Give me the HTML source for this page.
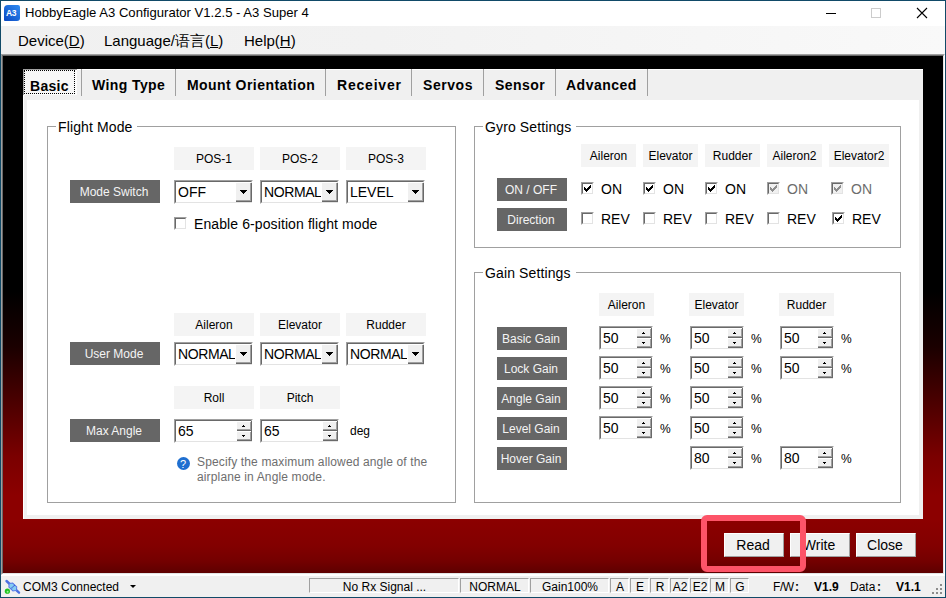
<!DOCTYPE html>
<html><head><meta charset="utf-8">
<style>
*{box-sizing:border-box;margin:0;padding:0}
html,body{width:946px;height:598px;overflow:hidden;background:#fff}
body{position:relative;font-family:"Liberation Sans",sans-serif;color:#000}
.a{position:absolute}
.t{position:absolute;white-space:pre;line-height:1}
#border{left:0;top:0;width:946px;height:598px;border:1px solid #114a68}
#title{left:1px;top:1px;width:944px;height:25px;background:#fff}
#menu{left:1px;top:26px;width:944px;height:28px;background:linear-gradient(to right,#f0f0f0 0%,#f2f2f2 40%,#f9f9f9 100%)}
#mdi{left:1px;top:54px;width:944px;height:521px;border-top:1px solid #a0a0a0;border-left:1px solid #a0a0a0;border-right:1px solid #fff;border-bottom:1px solid #fff}
#mdi2{left:2px;top:55px;width:942px;height:519px;border-top:1px solid #696969;border-left:1px solid #696969;border-right:1px solid #e3e3e3;border-bottom:1px solid #e3e3e3;
 background:linear-gradient(to bottom,#000 0px,#000 235px,#1a0000 290px,#4a0000 345px,#7a0000 400px,#8c0000 440px,#8c0000 463px,#820000 490px,#740000 505px,#5e0000 517px)}
#panel{left:23px;top:69px;width:900px;height:450px;background:#f0f0f0;border-left:1px solid #fff;border-top:1px solid #fff}
#page{left:27px;top:100px;width:892px;height:415px;background:#fff}
.sep{position:absolute;top:69px;width:1px;height:27px;background:#a0a0a0}
.tab{font-weight:bold;font-size:14px;letter-spacing:0.3px;top:78px}
.grp{position:absolute;border:1px solid #a0a0a0}
.gl{position:absolute;background:#fff;font-size:14px;line-height:1;padding:0 5px 0 2px;white-space:pre;letter-spacing:0.12px}
.hdr{position:absolute;background:#f4f4f4;font-size:12px;text-align:center;line-height:25px;height:23px;white-space:pre}
.lbl{position:absolute;background:#666;color:#f4f4f4;font-size:12px;text-align:center;line-height:25px;padding-right:2px;height:23px;white-space:pre}
.combo,.spin,.cb{position:absolute;background:#fff}
.combo{width:79px;height:24px}
.spin{width:54px;height:24px}
.cb{width:13px;height:13px}
.o{position:absolute;left:0;top:0;right:0;bottom:0;border-top:1px solid #a0a0a0;border-left:1px solid #a0a0a0;border-right:1px solid #fff;border-bottom:1px solid #fff}
.i{position:absolute;left:1px;top:1px;right:1px;bottom:1px;border-top:1px solid #696969;border-left:1px solid #696969;border-right:1px solid #e3e3e3;border-bottom:1px solid #e3e3e3}
.tx{position:absolute;left:4px;top:5px;font-size:14px;line-height:1;white-space:pre;overflow:hidden}
.combo .tx{width:57px}
.rb{position:absolute;right:2px;background:#f0f0f0;border-top:1px solid #fff;border-left:1px solid #fff;box-shadow:inset -1px -1px 0 #a0a0a0, 1px 1px 0 #696969}
.combo .rb{top:2px;width:16px;height:19px}
.spin .rb{width:15px;height:9px}
.spin .rs{position:absolute;right:1px;top:2px;width:1px;height:20px;background:#696969}
.spin .u{top:2px}.spin .d{top:12px}
.rb svg{position:absolute}
.combo .rb svg{left:4px;top:7px}
.spin .rb svg{left:5px;top:3px}
.cb svg{position:absolute;left:3px;top:3px}
.cbt{position:absolute;font-size:14px;line-height:1;white-space:pre}
.pct{position:absolute;font-size:12px;line-height:1;white-space:pre}
.btn3{position:absolute;height:24px;width:60px;padding-right:2px;background:#f0f0f0;border-top:1px solid #fff;border-left:1px solid #fff;border-right:1px solid #a0a0a0;border-bottom:1px solid #a0a0a0;font-size:14px;text-align:center;line-height:22px}
.sp{position:absolute;top:578px;height:15px;padding-left:1px;border-top:1px solid #a0a0a0;border-left:1px solid #a0a0a0;border-right:1px solid #fff;border-bottom:1px solid #fff;font-size:12px;text-align:center;line-height:17px;white-space:pre}
</style></head><body>
<div class="a" id="border"></div>
<div class="a" id="title"></div>
<!-- app icon -->
<div class="a" style="left:4px;top:5px;width:16px;height:16px;border-radius:4px 2px 3px 1px;background:linear-gradient(to top right,#0a48c2,#2e8cf2);"></div>
<div class="t" style="left:6px;top:9px;font-size:8.5px;font-weight:bold;color:#fff;letter-spacing:-0.4px">A3</div>
<div class="t" style="left:25px;top:6px;font-size:13.1px;color:#000">HobbyEagle A3 Configurator V1.2.5 - A3 Super 4</div>
<!-- window buttons -->
<div class="a" style="left:826px;top:13px;width:10px;height:1px;background:#000"></div>
<div class="a" style="left:871px;top:8px;width:10px;height:10px;border:1px solid #ccc"></div>
<svg class="a" style="left:916px;top:7px" width="12" height="12" viewBox="0 0 12 12"><path d="M1 1L11 11M11 1L1 11" stroke="#000" stroke-width="1.1"/></svg>

<div class="a" id="menu"></div>
<div class="t" style="left:18px;top:33px;font-size:15px">Device(<u>D</u>)</div>
<div class="t" style="left:104px;top:33px;font-size:15px">Language/语言(<u>L</u>)</div>
<div class="t" style="left:244px;top:33px;font-size:15px">Help(<u>H</u>)</div>

<div class="a" id="mdi"></div>
<div class="a" id="mdi2"></div>

<div class="a" id="panel"></div>
<!-- selected tab focus -->
<div class="a" style="left:23px;top:69px;width:54px;height:26px;border-left:1px solid #a0a0a0;border-top:1px solid #a0a0a0;background:#fcfcfc"></div>
<div class="a" style="left:24px;top:70px;width:51px;height:24px;border:1px dotted #000;background:#f7f7f7"></div>
<div class="sep" style="left:81px"></div>
<div class="sep" style="left:175px"></div>
<div class="sep" style="left:325px"></div>
<div class="sep" style="left:411px"></div>
<div class="sep" style="left:483px"></div>
<div class="sep" style="left:555px"></div>
<div class="sep" style="left:647px"></div>
<div class="t tab" style="left:30px;top:79px;letter-spacing:0.3px">Basic</div>
<div class="t tab" style="left:92px;letter-spacing:0.4px">Wing Type</div>
<div class="t tab" style="left:187px;letter-spacing:0.45px">Mount Orientation</div>
<div class="t tab" style="left:337px;letter-spacing:0.8px">Receiver</div>
<div class="t tab" style="left:423px;letter-spacing:0.55px">Servos</div>
<div class="t tab" style="left:495px;letter-spacing:0.45px">Sensor</div>
<div class="t tab" style="left:566px;letter-spacing:0.5px">Advanced</div>

<div class="a" id="page"></div>

<!-- Flight Mode group -->
<div class="grp" style="left:47px;top:126px;width:409px;height:377px"></div>
<div class="gl" style="left:56px;top:120px">Flight Mode</div>

<div class="hdr" style="left:174px;top:147px;width:80px">POS-1</div>
<div class="hdr" style="left:260px;top:147px;width:80px">POS-2</div>
<div class="hdr" style="left:346px;top:147px;width:80px">POS-3</div>
<div class="lbl" style="left:70px;top:180px;width:90px">Mode Switch</div>
<div class="combo" style="left:174px;top:180px"><div class="o"></div><div class="i"></div><div class="tx" style="left:4px">OFF</div><div class="rb"><svg width="7" height="4" shape-rendering="crispEdges"><g fill="#000"><rect x="0" y="0" width="7" height="1"/><rect x="1" y="1" width="5" height="1"/><rect x="2" y="2" width="3" height="1"/><rect x="3" y="3" width="1" height="1"/></g></svg></div></div>
<div class="combo" style="left:260px;top:180px"><div class="o"></div><div class="i"></div><div class="tx" style="left:4px;letter-spacing:-0.4px">NORMAL</div><div class="rb"><svg width="7" height="4" shape-rendering="crispEdges"><g fill="#000"><rect x="0" y="0" width="7" height="1"/><rect x="1" y="1" width="5" height="1"/><rect x="2" y="2" width="3" height="1"/><rect x="3" y="3" width="1" height="1"/></g></svg></div></div>
<div class="combo" style="left:346px;top:180px"><div class="o"></div><div class="i"></div><div class="tx" style="left:4px">LEVEL</div><div class="rb"><svg width="7" height="4" shape-rendering="crispEdges"><g fill="#000"><rect x="0" y="0" width="7" height="1"/><rect x="1" y="1" width="5" height="1"/><rect x="2" y="2" width="3" height="1"/><rect x="3" y="3" width="1" height="1"/></g></svg></div></div>
<div class="cb" style="left:174px;top:217px;background:#fff"><div class="o"></div><div class="i"></div></div>
<div class="cbt" style="left:194px;top:217px;letter-spacing:0.1px">Enable 6-position flight mode</div>

<div class="hdr" style="left:174px;top:313px;width:80px">Aileron</div>
<div class="hdr" style="left:260px;top:313px;width:80px">Elevator</div>
<div class="hdr" style="left:346px;top:313px;width:80px">Rudder</div>
<div class="lbl" style="left:70px;top:342px;width:90px">User Mode</div>
<div class="combo" style="left:174px;top:342px"><div class="o"></div><div class="i"></div><div class="tx" style="left:4px;letter-spacing:-0.4px">NORMAL</div><div class="rb"><svg width="7" height="4" shape-rendering="crispEdges"><g fill="#000"><rect x="0" y="0" width="7" height="1"/><rect x="1" y="1" width="5" height="1"/><rect x="2" y="2" width="3" height="1"/><rect x="3" y="3" width="1" height="1"/></g></svg></div></div>
<div class="combo" style="left:260px;top:342px"><div class="o"></div><div class="i"></div><div class="tx" style="left:4px;letter-spacing:-0.4px">NORMAL</div><div class="rb"><svg width="7" height="4" shape-rendering="crispEdges"><g fill="#000"><rect x="0" y="0" width="7" height="1"/><rect x="1" y="1" width="5" height="1"/><rect x="2" y="2" width="3" height="1"/><rect x="3" y="3" width="1" height="1"/></g></svg></div></div>
<div class="combo" style="left:346px;top:342px"><div class="o"></div><div class="i"></div><div class="tx" style="left:4px;letter-spacing:-0.4px">NORMAL</div><div class="rb"><svg width="7" height="4" shape-rendering="crispEdges"><g fill="#000"><rect x="0" y="0" width="7" height="1"/><rect x="1" y="1" width="5" height="1"/><rect x="2" y="2" width="3" height="1"/><rect x="3" y="3" width="1" height="1"/></g></svg></div></div>

<div class="hdr" style="left:174px;top:386px;width:80px">Roll</div>
<div class="hdr" style="left:260px;top:386px;width:80px">Pitch</div>
<div class="lbl" style="left:70px;top:419px;width:90px">Max Angle</div>
<div class="spin" style="left:174px;top:419px;width:79px"><div class="o"></div><div class="i"></div><div class="tx">65</div><div class="rb u"><svg width="3" height="2" shape-rendering="crispEdges"><g fill="#000"><rect x="1" y="0" width="1" height="1"/><rect x="0" y="1" width="3" height="1"/></g></svg></div><div class="rb d"><svg width="3" height="2" shape-rendering="crispEdges"><g fill="#000"><rect x="0" y="0" width="3" height="1"/><rect x="1" y="1" width="1" height="1"/></g></svg></div><div class="rs"></div></div>
<div class="spin" style="left:260px;top:419px;width:79px"><div class="o"></div><div class="i"></div><div class="tx">65</div><div class="rb u"><svg width="3" height="2" shape-rendering="crispEdges"><g fill="#000"><rect x="1" y="0" width="1" height="1"/><rect x="0" y="1" width="3" height="1"/></g></svg></div><div class="rb d"><svg width="3" height="2" shape-rendering="crispEdges"><g fill="#000"><rect x="0" y="0" width="3" height="1"/><rect x="1" y="1" width="1" height="1"/></g></svg></div><div class="rs"></div></div>
<div class="pct" style="left:350px;top:425px">deg</div>
<div class="a" style="left:177px;top:457px;width:13px;height:13px;border-radius:50%;background:#1f6fd0"></div>
<div class="t" style="left:180px;top:459px;font-size:11px;color:#fff">?</div>
<div class="t" style="left:197px;top:455px;font-size:12px;color:#6e6e6e;line-height:15px;letter-spacing:0.14px">Specify the maximum allowed angle of the
airplane in Angle mode.</div>

<!-- Gyro Settings group -->
<div class="grp" style="left:474px;top:126px;width:427px;height:122px"></div>
<div class="gl" style="left:483px;top:120px">Gyro Settings</div>
<div class="hdr" style="left:581px;top:144px;width:55px">Aileron</div>
<div class="hdr" style="left:643px;top:144px;width:55px">Elevator</div>
<div class="hdr" style="left:705px;top:144px;width:55px">Rudder</div>
<div class="hdr" style="left:767px;top:144px;width:55px">Aileron2</div>
<div class="hdr" style="left:829px;top:144px;width:60px">Elevator2</div>
<div class="lbl" style="left:497px;top:178px;width:70px">ON / OFF</div>
<div class="lbl" style="left:497px;top:208px;width:70px">Direction</div>

<div class="cb" style="left:581px;top:182px;background:#fff"><div class="o"></div><div class="i"></div><svg width="7" height="7" shape-rendering="crispEdges"><g fill="#000"><rect x="6" y="0" width="1" height="1"/><rect x="5" y="1" width="2" height="1"/><rect x="0" y="2" width="1" height="1"/><rect x="4" y="2" width="3" height="1"/><rect x="0" y="3" width="2" height="1"/><rect x="3" y="3" width="3" height="1"/><rect x="0" y="4" width="5" height="1"/><rect x="1" y="5" width="3" height="1"/><rect x="2" y="6" width="1" height="1"/></g></svg></div>
<div class="cbt" style="left:601px;top:182px;color:#000">ON</div>
<div class="cb" style="left:581px;top:212px;background:#fff"><div class="o"></div><div class="i"></div></div>
<div class="cbt" style="left:601px;top:212px">REV</div>
<div class="cb" style="left:643px;top:182px;background:#fff"><div class="o"></div><div class="i"></div><svg width="7" height="7" shape-rendering="crispEdges"><g fill="#000"><rect x="6" y="0" width="1" height="1"/><rect x="5" y="1" width="2" height="1"/><rect x="0" y="2" width="1" height="1"/><rect x="4" y="2" width="3" height="1"/><rect x="0" y="3" width="2" height="1"/><rect x="3" y="3" width="3" height="1"/><rect x="0" y="4" width="5" height="1"/><rect x="1" y="5" width="3" height="1"/><rect x="2" y="6" width="1" height="1"/></g></svg></div>
<div class="cbt" style="left:663px;top:182px;color:#000">ON</div>
<div class="cb" style="left:643px;top:212px;background:#fff"><div class="o"></div><div class="i"></div></div>
<div class="cbt" style="left:663px;top:212px">REV</div>
<div class="cb" style="left:705px;top:182px;background:#fff"><div class="o"></div><div class="i"></div><svg width="7" height="7" shape-rendering="crispEdges"><g fill="#000"><rect x="6" y="0" width="1" height="1"/><rect x="5" y="1" width="2" height="1"/><rect x="0" y="2" width="1" height="1"/><rect x="4" y="2" width="3" height="1"/><rect x="0" y="3" width="2" height="1"/><rect x="3" y="3" width="3" height="1"/><rect x="0" y="4" width="5" height="1"/><rect x="1" y="5" width="3" height="1"/><rect x="2" y="6" width="1" height="1"/></g></svg></div>
<div class="cbt" style="left:725px;top:182px;color:#000">ON</div>
<div class="cb" style="left:705px;top:212px;background:#fff"><div class="o"></div><div class="i"></div></div>
<div class="cbt" style="left:725px;top:212px">REV</div>
<div class="cb" style="left:767px;top:182px;background:#f0f0f0"><div class="o"></div><div class="i"></div><svg width="7" height="7" shape-rendering="crispEdges"><g fill="#8d8d8d"><rect x="6" y="0" width="1" height="1"/><rect x="5" y="1" width="2" height="1"/><rect x="0" y="2" width="1" height="1"/><rect x="4" y="2" width="3" height="1"/><rect x="0" y="3" width="2" height="1"/><rect x="3" y="3" width="3" height="1"/><rect x="0" y="4" width="5" height="1"/><rect x="1" y="5" width="3" height="1"/><rect x="2" y="6" width="1" height="1"/></g></svg></div>
<div class="cbt" style="left:787px;top:182px;color:#6d6d6d">ON</div>
<div class="cb" style="left:767px;top:212px;background:#fff"><div class="o"></div><div class="i"></div></div>
<div class="cbt" style="left:787px;top:212px">REV</div>
<div class="cb" style="left:831px;top:182px;background:#f0f0f0"><div class="o"></div><div class="i"></div><svg width="7" height="7" shape-rendering="crispEdges"><g fill="#8d8d8d"><rect x="6" y="0" width="1" height="1"/><rect x="5" y="1" width="2" height="1"/><rect x="0" y="2" width="1" height="1"/><rect x="4" y="2" width="3" height="1"/><rect x="0" y="3" width="2" height="1"/><rect x="3" y="3" width="3" height="1"/><rect x="0" y="4" width="5" height="1"/><rect x="1" y="5" width="3" height="1"/><rect x="2" y="6" width="1" height="1"/></g></svg></div>
<div class="cbt" style="left:851px;top:182px;color:#6d6d6d">ON</div>
<div class="cb" style="left:832px;top:212px;background:#fff"><div class="o"></div><div class="i"></div><svg width="7" height="7" shape-rendering="crispEdges"><g fill="#000"><rect x="6" y="0" width="1" height="1"/><rect x="5" y="1" width="2" height="1"/><rect x="0" y="2" width="1" height="1"/><rect x="4" y="2" width="3" height="1"/><rect x="0" y="3" width="2" height="1"/><rect x="3" y="3" width="3" height="1"/><rect x="0" y="4" width="5" height="1"/><rect x="1" y="5" width="3" height="1"/><rect x="2" y="6" width="1" height="1"/></g></svg></div>
<div class="cbt" style="left:852px;top:212px">REV</div>

<!-- Gain Settings group -->
<div class="grp" style="left:474px;top:272px;width:427px;height:231px"></div>
<div class="gl" style="left:483px;top:266px">Gain Settings</div>
<div class="hdr" style="left:599px;top:293px;width:55px">Aileron</div>
<div class="hdr" style="left:689px;top:293px;width:55px">Elevator</div>
<div class="hdr" style="left:779px;top:293px;width:55px">Rudder</div>
<div class="lbl" style="left:497px;top:327px;width:70px">Basic Gain</div>
<div class="lbl" style="left:497px;top:357px;width:70px">Lock Gain</div>
<div class="lbl" style="left:497px;top:387px;width:70px">Angle Gain</div>
<div class="lbl" style="left:497px;top:417px;width:70px">Level Gain</div>
<div class="lbl" style="left:497px;top:447px;width:70px">Hover Gain</div>

<div class="spin" style="left:599px;top:326px;width:54px"><div class="o"></div><div class="i"></div><div class="tx">50</div><div class="rb u"><svg width="3" height="2" shape-rendering="crispEdges"><g fill="#000"><rect x="1" y="0" width="1" height="1"/><rect x="0" y="1" width="3" height="1"/></g></svg></div><div class="rb d"><svg width="3" height="2" shape-rendering="crispEdges"><g fill="#000"><rect x="0" y="0" width="3" height="1"/><rect x="1" y="1" width="1" height="1"/></g></svg></div><div class="rs"></div></div>
<div class="pct" style="left:660px;top:333px">%</div>
<div class="spin" style="left:690px;top:326px;width:54px"><div class="o"></div><div class="i"></div><div class="tx">50</div><div class="rb u"><svg width="3" height="2" shape-rendering="crispEdges"><g fill="#000"><rect x="1" y="0" width="1" height="1"/><rect x="0" y="1" width="3" height="1"/></g></svg></div><div class="rb d"><svg width="3" height="2" shape-rendering="crispEdges"><g fill="#000"><rect x="0" y="0" width="3" height="1"/><rect x="1" y="1" width="1" height="1"/></g></svg></div><div class="rs"></div></div>
<div class="pct" style="left:751px;top:333px">%</div>
<div class="spin" style="left:780px;top:326px;width:54px"><div class="o"></div><div class="i"></div><div class="tx">50</div><div class="rb u"><svg width="3" height="2" shape-rendering="crispEdges"><g fill="#000"><rect x="1" y="0" width="1" height="1"/><rect x="0" y="1" width="3" height="1"/></g></svg></div><div class="rb d"><svg width="3" height="2" shape-rendering="crispEdges"><g fill="#000"><rect x="0" y="0" width="3" height="1"/><rect x="1" y="1" width="1" height="1"/></g></svg></div><div class="rs"></div></div>
<div class="pct" style="left:841px;top:333px">%</div>
<div class="spin" style="left:599px;top:356px;width:54px"><div class="o"></div><div class="i"></div><div class="tx">50</div><div class="rb u"><svg width="3" height="2" shape-rendering="crispEdges"><g fill="#000"><rect x="1" y="0" width="1" height="1"/><rect x="0" y="1" width="3" height="1"/></g></svg></div><div class="rb d"><svg width="3" height="2" shape-rendering="crispEdges"><g fill="#000"><rect x="0" y="0" width="3" height="1"/><rect x="1" y="1" width="1" height="1"/></g></svg></div><div class="rs"></div></div>
<div class="pct" style="left:660px;top:363px">%</div>
<div class="spin" style="left:690px;top:356px;width:54px"><div class="o"></div><div class="i"></div><div class="tx">50</div><div class="rb u"><svg width="3" height="2" shape-rendering="crispEdges"><g fill="#000"><rect x="1" y="0" width="1" height="1"/><rect x="0" y="1" width="3" height="1"/></g></svg></div><div class="rb d"><svg width="3" height="2" shape-rendering="crispEdges"><g fill="#000"><rect x="0" y="0" width="3" height="1"/><rect x="1" y="1" width="1" height="1"/></g></svg></div><div class="rs"></div></div>
<div class="pct" style="left:751px;top:363px">%</div>
<div class="spin" style="left:780px;top:356px;width:54px"><div class="o"></div><div class="i"></div><div class="tx">50</div><div class="rb u"><svg width="3" height="2" shape-rendering="crispEdges"><g fill="#000"><rect x="1" y="0" width="1" height="1"/><rect x="0" y="1" width="3" height="1"/></g></svg></div><div class="rb d"><svg width="3" height="2" shape-rendering="crispEdges"><g fill="#000"><rect x="0" y="0" width="3" height="1"/><rect x="1" y="1" width="1" height="1"/></g></svg></div><div class="rs"></div></div>
<div class="pct" style="left:841px;top:363px">%</div>
<div class="spin" style="left:599px;top:386px;width:54px"><div class="o"></div><div class="i"></div><div class="tx">50</div><div class="rb u"><svg width="3" height="2" shape-rendering="crispEdges"><g fill="#000"><rect x="1" y="0" width="1" height="1"/><rect x="0" y="1" width="3" height="1"/></g></svg></div><div class="rb d"><svg width="3" height="2" shape-rendering="crispEdges"><g fill="#000"><rect x="0" y="0" width="3" height="1"/><rect x="1" y="1" width="1" height="1"/></g></svg></div><div class="rs"></div></div>
<div class="pct" style="left:660px;top:393px">%</div>
<div class="spin" style="left:690px;top:386px;width:54px"><div class="o"></div><div class="i"></div><div class="tx">50</div><div class="rb u"><svg width="3" height="2" shape-rendering="crispEdges"><g fill="#000"><rect x="1" y="0" width="1" height="1"/><rect x="0" y="1" width="3" height="1"/></g></svg></div><div class="rb d"><svg width="3" height="2" shape-rendering="crispEdges"><g fill="#000"><rect x="0" y="0" width="3" height="1"/><rect x="1" y="1" width="1" height="1"/></g></svg></div><div class="rs"></div></div>
<div class="pct" style="left:751px;top:393px">%</div>
<div class="spin" style="left:599px;top:416px;width:54px"><div class="o"></div><div class="i"></div><div class="tx">50</div><div class="rb u"><svg width="3" height="2" shape-rendering="crispEdges"><g fill="#000"><rect x="1" y="0" width="1" height="1"/><rect x="0" y="1" width="3" height="1"/></g></svg></div><div class="rb d"><svg width="3" height="2" shape-rendering="crispEdges"><g fill="#000"><rect x="0" y="0" width="3" height="1"/><rect x="1" y="1" width="1" height="1"/></g></svg></div><div class="rs"></div></div>
<div class="pct" style="left:660px;top:423px">%</div>
<div class="spin" style="left:690px;top:416px;width:54px"><div class="o"></div><div class="i"></div><div class="tx">50</div><div class="rb u"><svg width="3" height="2" shape-rendering="crispEdges"><g fill="#000"><rect x="1" y="0" width="1" height="1"/><rect x="0" y="1" width="3" height="1"/></g></svg></div><div class="rb d"><svg width="3" height="2" shape-rendering="crispEdges"><g fill="#000"><rect x="0" y="0" width="3" height="1"/><rect x="1" y="1" width="1" height="1"/></g></svg></div><div class="rs"></div></div>
<div class="pct" style="left:751px;top:423px">%</div>
<div class="spin" style="left:690px;top:446px;width:54px"><div class="o"></div><div class="i"></div><div class="tx">80</div><div class="rb u"><svg width="3" height="2" shape-rendering="crispEdges"><g fill="#000"><rect x="1" y="0" width="1" height="1"/><rect x="0" y="1" width="3" height="1"/></g></svg></div><div class="rb d"><svg width="3" height="2" shape-rendering="crispEdges"><g fill="#000"><rect x="0" y="0" width="3" height="1"/><rect x="1" y="1" width="1" height="1"/></g></svg></div><div class="rs"></div></div>
<div class="pct" style="left:751px;top:453px">%</div>
<div class="spin" style="left:780px;top:446px;width:54px"><div class="o"></div><div class="i"></div><div class="tx">80</div><div class="rb u"><svg width="3" height="2" shape-rendering="crispEdges"><g fill="#000"><rect x="1" y="0" width="1" height="1"/><rect x="0" y="1" width="3" height="1"/></g></svg></div><div class="rb d"><svg width="3" height="2" shape-rendering="crispEdges"><g fill="#000"><rect x="0" y="0" width="3" height="1"/><rect x="1" y="1" width="1" height="1"/></g></svg></div><div class="rs"></div></div>
<div class="pct" style="left:841px;top:453px">%</div>

<!-- bottom buttons -->
<div class="btn3" style="left:724px;top:533px">Read</div>
<div class="btn3" style="left:790px;top:533px">Write</div>
<div class="btn3" style="left:856px;top:533px">Close</div>
<!-- annotation -->
<div class="a" style="left:701px;top:515px;width:105px;height:57px;border:6px solid #fd5468;border-radius:6px"></div>

<!-- status bar -->
<div class="a" style="left:1px;top:576px;width:944px;height:21px;background:#f0f0f0"></div>
<svg class="a" style="left:4px;top:578px" width="18" height="18" viewBox="0 0 18 18">
<path d="M2.5 3 L15 14.7" stroke="#4b6fe2" stroke-width="2.4" stroke-linecap="round"/>
<g transform="rotate(43 8.8 9)"><path d="M3.8 9 L6 6.2 L11.6 6.2 L13.8 9 L11.6 11.8 L6 11.8 Z" fill="#86cdf2" stroke="#5878e6" stroke-width="1"/><path d="M8.8 6.4 L8.8 11.6" stroke="#2a3fd0" stroke-width="1" stroke-dasharray="1 0.6"/></g>
<circle cx="3.4" cy="13.2" r="2.6" fill="#1ec41e"/><circle cx="3.6" cy="13.8" r="1" fill="#9af09a"/>
</svg>
<div class="t" style="left:23px;top:581px;font-size:12px">COM3 Connected</div>
<div class="a" style="left:130px;top:585px;border-left:3px solid transparent;border-right:3px solid transparent;border-top:3px solid #000"></div>
<div class="sp" style="left:309px;width:150px">No Rx Signal ...</div>
<div class="sp" style="left:460px;width:69px">NORMAL</div>
<div class="sp" style="left:530px;width:79px">Gain100%</div>
<div class="sp" style="left:610px;width:19px">A</div>
<div class="sp" style="left:630px;width:19px">E</div>
<div class="sp" style="left:650px;width:19px">R</div>
<div class="sp" style="left:670px;width:19px">A2</div>
<div class="sp" style="left:690px;width:19px">E2</div>
<div class="sp" style="left:710px;width:19px">M</div>
<div class="sp" style="left:730px;width:19px">G</div>
<div class="t" style="left:773px;top:581px;font-size:12px;letter-spacing:-0.4px">F/W</div><div class="t" style="left:795px;top:581px;font-size:12px;font-weight:bold">:</div>
<div class="t" style="left:814px;top:581px;font-size:12px;font-weight:bold">V1.9</div>
<div class="t" style="left:850px;top:581px;font-size:12px">Data</div><div class="t" style="left:877px;top:581px;font-size:12px;font-weight:bold">:</div>
<div class="t" style="left:896px;top:581px;font-size:12px;font-weight:bold">V1.1</div>
<svg class="a" style="left:931px;top:583px" width="13" height="13" viewBox="0 0 13 13">
<g fill="#8c8c8c"><rect x="9" y="1" width="2" height="2"/><rect x="5" y="5" width="2" height="2"/><rect x="9" y="5" width="2" height="2"/><rect x="1" y="9" width="2" height="2"/><rect x="5" y="9" width="2" height="2"/><rect x="9" y="9" width="2" height="2"/></g>
</svg>
</body></html>
